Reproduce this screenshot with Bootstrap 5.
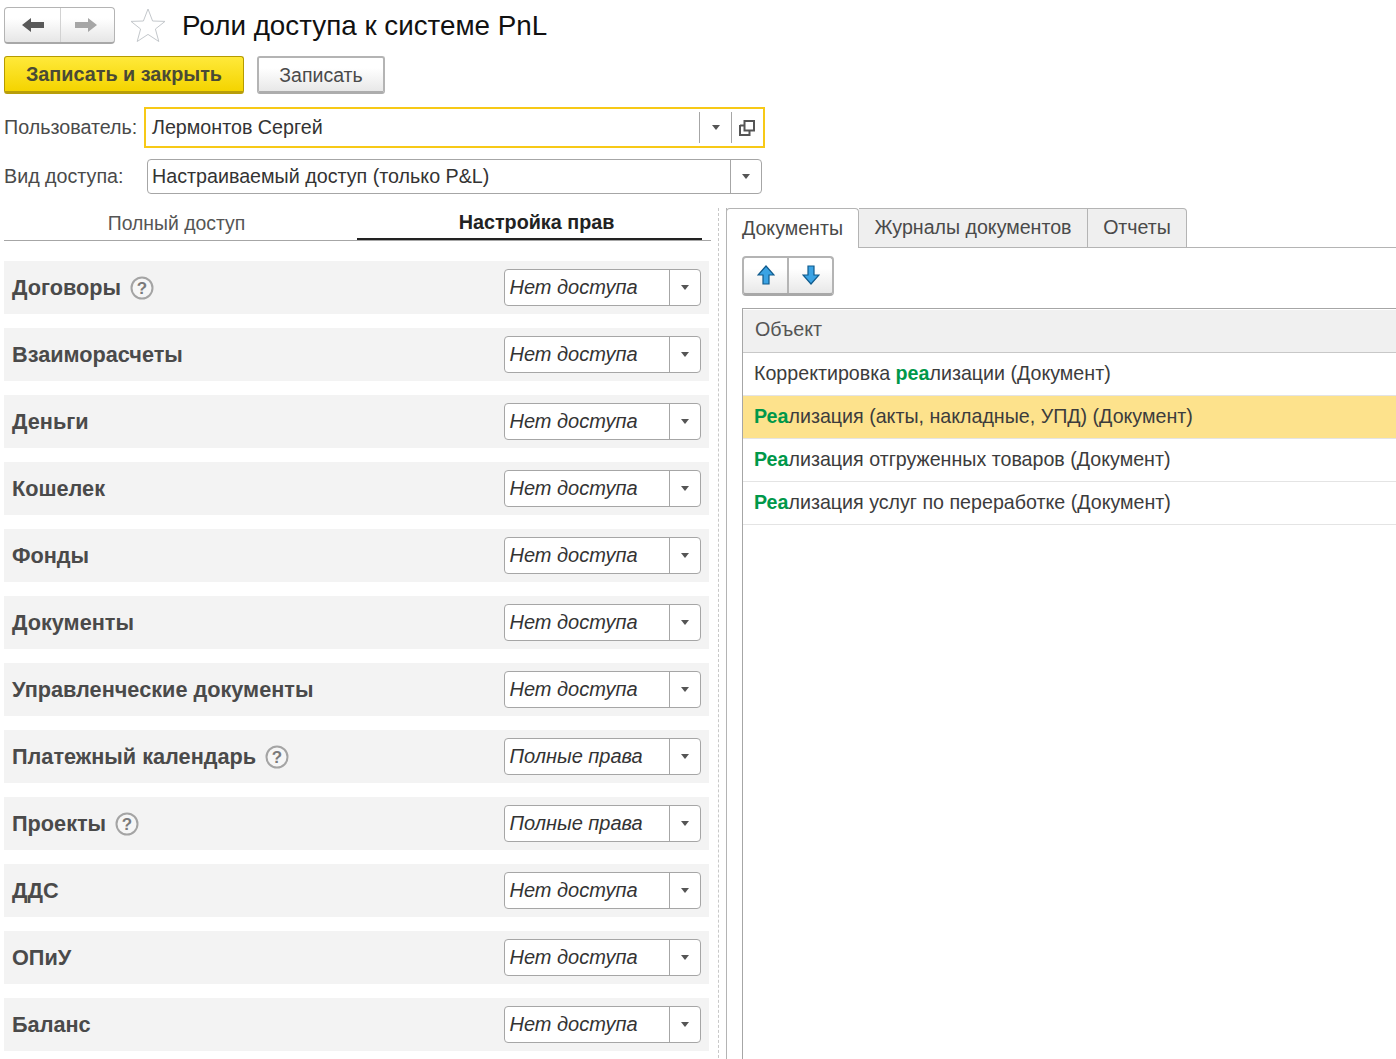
<!DOCTYPE html>
<html lang="ru">
<head>
<meta charset="utf-8">
<title>Роли доступа к системе PnL</title>
<link rel="stylesheet" href="https://cdn.jsdelivr.net/npm/bootstrap@5.3.0/dist/css/bootstrap.min.css">
<style>
html,body{margin:0;background:#fff;}
body{font-family:"Liberation Sans",Arial,sans-serif;font-size:19.7px;color:#4a4a4a;line-height:1.2;}
.pg{width:1396px;height:1059px;overflow:hidden;}
.bar1{height:56px;padding:7px 0 0 4px;}
.navgrp{width:111px;height:37px;border:1px solid #b4b4b4;border-bottom:2px solid #a8a8a8;border-radius:4px;background:linear-gradient(#fff 30%,#e6e6e6);}
.navgrp>div{display:flex;align-items:center;justify-content:center;height:100%;}
.navl{width:56px;border-right:1px solid #d2d2d2;}
.navr{flex:1;padding-right:4px;}
.starw{margin-left:15px;margin-top:1px;line-height:0;}
.ttl{font-size:27.8px;color:#111;margin:0 0 0 16px;font-weight:400;line-height:37px;}
.bar2{height:51px;padding-left:4px;gap:13px;}
.bt{height:38px;display:flex;align-items:center;justify-content:center;border-radius:3px;font-size:19.5px;padding:2px 0 0;}
.bty{width:240px;border:1px solid #b59b00;border-bottom:3px solid #b89e0a;background:linear-gradient(#ffe93a,#f4d400);font-weight:700;font-size:19.8px;color:#4a4a35;}
.btg{width:128px;border:2px solid #b4b4b4;border-bottom:3px solid #adadad;background:linear-gradient(#fff 30%,#e8e8e8);color:#4a4a4a;}
.frow{padding-left:4px;}
.frow1{height:52px;}
.frow2{height:49px;}
.lbl1{width:140px;white-space:nowrap;}
.lbl2{width:143px;white-space:nowrap;}
.fld{display:flex;align-items:stretch;background:#fff;color:#333;}
.fld1{width:621px;height:41px;border:2px solid #f7c917;}
.fld2{width:615px;height:35px;border:1px solid #a6a6a6;border-radius:4px;}
.ftxt{flex:1;padding-left:6px;display:flex;align-items:center;white-space:nowrap;}
.fld2 .ftxt{padding-left:4px;}
.fbtn{display:flex;align-items:center;justify-content:center;border-left:1px solid #a6a6a6;}
.fld1 .fbtn{margin:3px 0;width:32px;}
.fld1 .fbtn2{width:32px;padding-right:2px;}
.fld2 .fbtn{width:31px;}
.tri{width:0;height:0;border-left:4px solid transparent;border-right:4px solid transparent;border-top:5px solid #555;}
.lft{width:707px;flex:none;}
.ltabs{height:33px;border-bottom:1px solid #a6a6a6;}
.lt1{width:345px;text-align:center;font-size:19.4px;color:#555;line-height:30px;}
.lt2{margin-left:8px;margin-bottom:-1px;width:345px;padding-left:14px;text-align:center;font-weight:700;font-size:19.75px;color:#222;border-bottom:2px solid #222;line-height:29px;height:32px;}
.rws{padding-top:20px;}
.rw{height:53px;background:#f3f3f3;margin-bottom:14px;width:705px;padding:0 8px;}
.rwn{font-weight:700;font-size:21.7px;color:#4a4a4a;white-space:nowrap;padding-top:2px;}
.qm{margin-left:9px;margin-top:1px;line-height:0;}
.cmb{width:197px;height:37px;border:1px solid #a6a6a6;border-radius:4px;background:#fff;display:flex;flex:none;}
.cmbt{flex:1;font-style:italic;color:#333;display:flex;align-items:center;padding:0 0 2px 4.500px;white-space:nowrap;font-size:20px;}
.cmbb{width:31px;border-left:1px solid #a6a6a6;display:flex;align-items:center;justify-content:center;padding-right:1px;}
.dsh{width:0;margin-left:7px;border-left:1px dashed #c8c8c8;height:860px;flex:none;}
.rgt{margin-left:7px;flex:1;min-width:0;border-left:1px solid #b4b4b4;height:860px;}
.rtabs{height:40px;margin-left:-1px;border-bottom:1px solid #b4b4b4;}
.rtb{height:40px;display:flex;align-items:center;justify-content:center;background:#efefef;border:1px solid #b4b4b4;border-left:0;color:#4a4a4a;font-size:19.6px;white-space:nowrap;}
.rtb.on{background:#fff;border-left:1px solid #b4b4b4;border-bottom:0;border-radius:4px 4px 0 0;width:133px;height:40px;}
.rtb2{width:229px;}
.rtb3{width:99px;border-radius:0 4px 0 0;}
.arwgrp{margin:8px 0 0 15px;width:92px;height:40px;border:2px solid #b4b4b4;border-bottom:3px solid #a8a8a8;border-radius:4px;background:linear-gradient(#fff 30%,#e8e8e8);}
.arwgrp>div{flex:1;display:flex;align-items:center;justify-content:center;padding-bottom:1px;}
.arwgrp>div:first-child{border-right:2px solid #b4b4b4;}
.tblw{margin:12px 0 0 15px;border:1px solid #a6a6a6;border-right:0;border-bottom:0;height:760px;padding-top:1px;}
.thd{height:43px;background:#f0f0f0;border-bottom:1px solid #c8c8c8;padding:0 0 2px 12px;display:flex;align-items:center;font-size:19.7px;color:#555;}
.trw{height:43px;border-bottom:1px solid #e4e4e4;display:flex;align-items:center;color:#3c3c3c;white-space:nowrap;font-size:19.65px;border-radius:0;border-left:0;border-right:0;border-top:0;background:#fff;margin:0;}
.trw.sel{background:#fde28c;}
.hl{color:#00984a;font-weight:700;}
.trw.list-group-item{padding:0 0 0 11px;}
.lgw{border-radius:0;}
</style>
</head>
<body>
<div class="pg">
  <div class="bar1 d-flex align-items-start">
    <div class="navgrp d-flex">
      <div class="navl"><svg width="24" height="16" viewBox="0 0 24 16"><path d="M1 8 L10 1 V5 H23 V11 H10 V15 Z" fill="#595959"/></svg></div>
      <div class="navr"><svg width="24" height="16" viewBox="0 0 24 16"><path d="M23 8 L14 1 V5 H1 V11 H14 V15 Z" fill="#a6a6a6"/></svg></div>
    </div>
    <div class="starw"><svg width="36" height="35" viewBox="0 0 36 35"><path d="M18 1 L22.600 13 L35 13.400 L25.400 21 L28.800 33.500 L18 26.400 L7.200 33.500 L10.600 21 L1 13.400 L13.400 13 Z" fill="#fff" stroke="#c4c8cc" stroke-width="1"/></svg></div>
    <h1 class="ttl">Роли доступа к системе PnL</h1>
  </div>
  <div class="bar2 d-flex align-items-start">
    <button type="button" class="btn bt bty">Записать и закрыть</button>
    <button type="button" class="btn bt btg">Записать</button>
  </div>
  <div class="frow frow1 d-flex align-items-start">
    <div class="lbl1 d-flex align-items-center" style="height:41px">Пользователь:</div>
    <div class="fld fld1">
      <div class="ftxt">Лермонтов Сергей</div>
      <div class="fbtn"><span class="tri"></span></div>
      <div class="fbtn fbtn2"><svg width="16" height="16" viewBox="0 0 16 16"><path d="M5.500 1H15V10.500H5.500Z M1 5.500H5.500 M1 5V15H10.500V10.500" fill="none" stroke="#555" stroke-width="2"/></svg></div>
    </div>
  </div>
  <div class="frow frow2 d-flex align-items-start">
    <div class="lbl2 d-flex align-items-center" style="height:35px">Вид доступа:</div>
    <div class="fld fld2">
      <div class="ftxt">Настраиваемый доступ (только P&amp;L)</div>
      <div class="fbtn"><span class="tri"></span></div>
    </div>
  </div>
  <div class="d-flex ps-1">
    <div class="lft">
      <div class="ltabs d-flex">
        <div class="lt1">Полный доступ</div>
        <div class="lt2">Настройка прав</div>
      </div>
      <div class="rws">
        <div class="rw d-flex align-items-center justify-content-between"><div class="d-flex align-items-center"><span class="rwn">Договоры</span><span class="qm"><svg width="24" height="24" viewBox="0 0 24 24"><circle cx="12" cy="12" r="10.500" fill="#f6f6f6" stroke="#a4a4a4" stroke-width="2"/><text x="12" y="18" text-anchor="middle" font-family="Liberation Sans" font-weight="700" font-size="17" fill="#7a7a7a">?</text></svg></span></div><div class="cmb"><div class="cmbt">Нет доступа</div><div class="cmbb"><span class="tri"></span></div></div></div>
        <div class="rw d-flex align-items-center justify-content-between"><span class="rwn">Взаиморасчеты</span><div class="cmb"><div class="cmbt">Нет доступа</div><div class="cmbb"><span class="tri"></span></div></div></div>
        <div class="rw d-flex align-items-center justify-content-between"><span class="rwn">Деньги</span><div class="cmb"><div class="cmbt">Нет доступа</div><div class="cmbb"><span class="tri"></span></div></div></div>
        <div class="rw d-flex align-items-center justify-content-between"><span class="rwn">Кошелек</span><div class="cmb"><div class="cmbt">Нет доступа</div><div class="cmbb"><span class="tri"></span></div></div></div>
        <div class="rw d-flex align-items-center justify-content-between"><span class="rwn">Фонды</span><div class="cmb"><div class="cmbt">Нет доступа</div><div class="cmbb"><span class="tri"></span></div></div></div>
        <div class="rw d-flex align-items-center justify-content-between"><span class="rwn">Документы</span><div class="cmb"><div class="cmbt">Нет доступа</div><div class="cmbb"><span class="tri"></span></div></div></div>
        <div class="rw d-flex align-items-center justify-content-between"><span class="rwn">Управленческие документы</span><div class="cmb"><div class="cmbt">Нет доступа</div><div class="cmbb"><span class="tri"></span></div></div></div>
        <div class="rw d-flex align-items-center justify-content-between"><div class="d-flex align-items-center"><span class="rwn">Платежный календарь</span><span class="qm"><svg width="24" height="24" viewBox="0 0 24 24"><circle cx="12" cy="12" r="10.500" fill="#f6f6f6" stroke="#a4a4a4" stroke-width="2"/><text x="12" y="18" text-anchor="middle" font-family="Liberation Sans" font-weight="700" font-size="17" fill="#7a7a7a">?</text></svg></span></div><div class="cmb"><div class="cmbt">Полные права</div><div class="cmbb"><span class="tri"></span></div></div></div>
        <div class="rw d-flex align-items-center justify-content-between"><div class="d-flex align-items-center"><span class="rwn">Проекты</span><span class="qm"><svg width="24" height="24" viewBox="0 0 24 24"><circle cx="12" cy="12" r="10.500" fill="#f6f6f6" stroke="#a4a4a4" stroke-width="2"/><text x="12" y="18" text-anchor="middle" font-family="Liberation Sans" font-weight="700" font-size="17" fill="#7a7a7a">?</text></svg></span></div><div class="cmb"><div class="cmbt">Полные права</div><div class="cmbb"><span class="tri"></span></div></div></div>
        <div class="rw d-flex align-items-center justify-content-between"><span class="rwn">ДДС</span><div class="cmb"><div class="cmbt">Нет доступа</div><div class="cmbb"><span class="tri"></span></div></div></div>
        <div class="rw d-flex align-items-center justify-content-between"><span class="rwn">ОПиУ</span><div class="cmb"><div class="cmbt">Нет доступа</div><div class="cmbb"><span class="tri"></span></div></div></div>
        <div class="rw d-flex align-items-center justify-content-between"><span class="rwn">Баланс</span><div class="cmb"><div class="cmbt">Нет доступа</div><div class="cmbb"><span class="tri"></span></div></div></div>
      </div>
    </div>
    <div class="dsh"></div>
    <div class="rgt">
      <div class="rtabs d-flex">
        <div class="rtb on">Документы</div>
        <div class="rtb rtb2">Журналы документов</div>
        <div class="rtb rtb3">Отчеты</div>
      </div>
      <div class="arwgrp d-flex">
        <div><svg width="18" height="20" viewBox="0 0 18 20"><path d="M9 1 L17 10 H12 V19 H6 V10 H1 Z" fill="#3ba3e4" stroke="#0f5a8c" stroke-width="1.200"/></svg></div>
        <div><svg width="18" height="20" viewBox="0 0 18 20"><path d="M9 19 L17 10 H12 V1 H6 V10 H1 Z" fill="#3ba3e4" stroke="#0f5a8c" stroke-width="1.200"/></svg></div>
      </div>
      <div class="tblw">
        <div class="thd">Объект</div>
        <div class="list-group lgw">
          <div class="list-group-item trw"><span>Корректировка <span class="hl">реа</span>лизации (Документ)</span></div>
          <div class="list-group-item trw sel"><span><span class="hl">Реа</span>лизация (акты, накладные, УПД) (Документ)</span></div>
          <div class="list-group-item trw"><span><span class="hl">Реа</span>лизация отгруженных товаров (Документ)</span></div>
          <div class="list-group-item trw"><span><span class="hl">Реа</span>лизация услуг по переработке (Документ)</span></div>
        </div>
      </div>
    </div>
  </div>
</div>
</body>
</html>
